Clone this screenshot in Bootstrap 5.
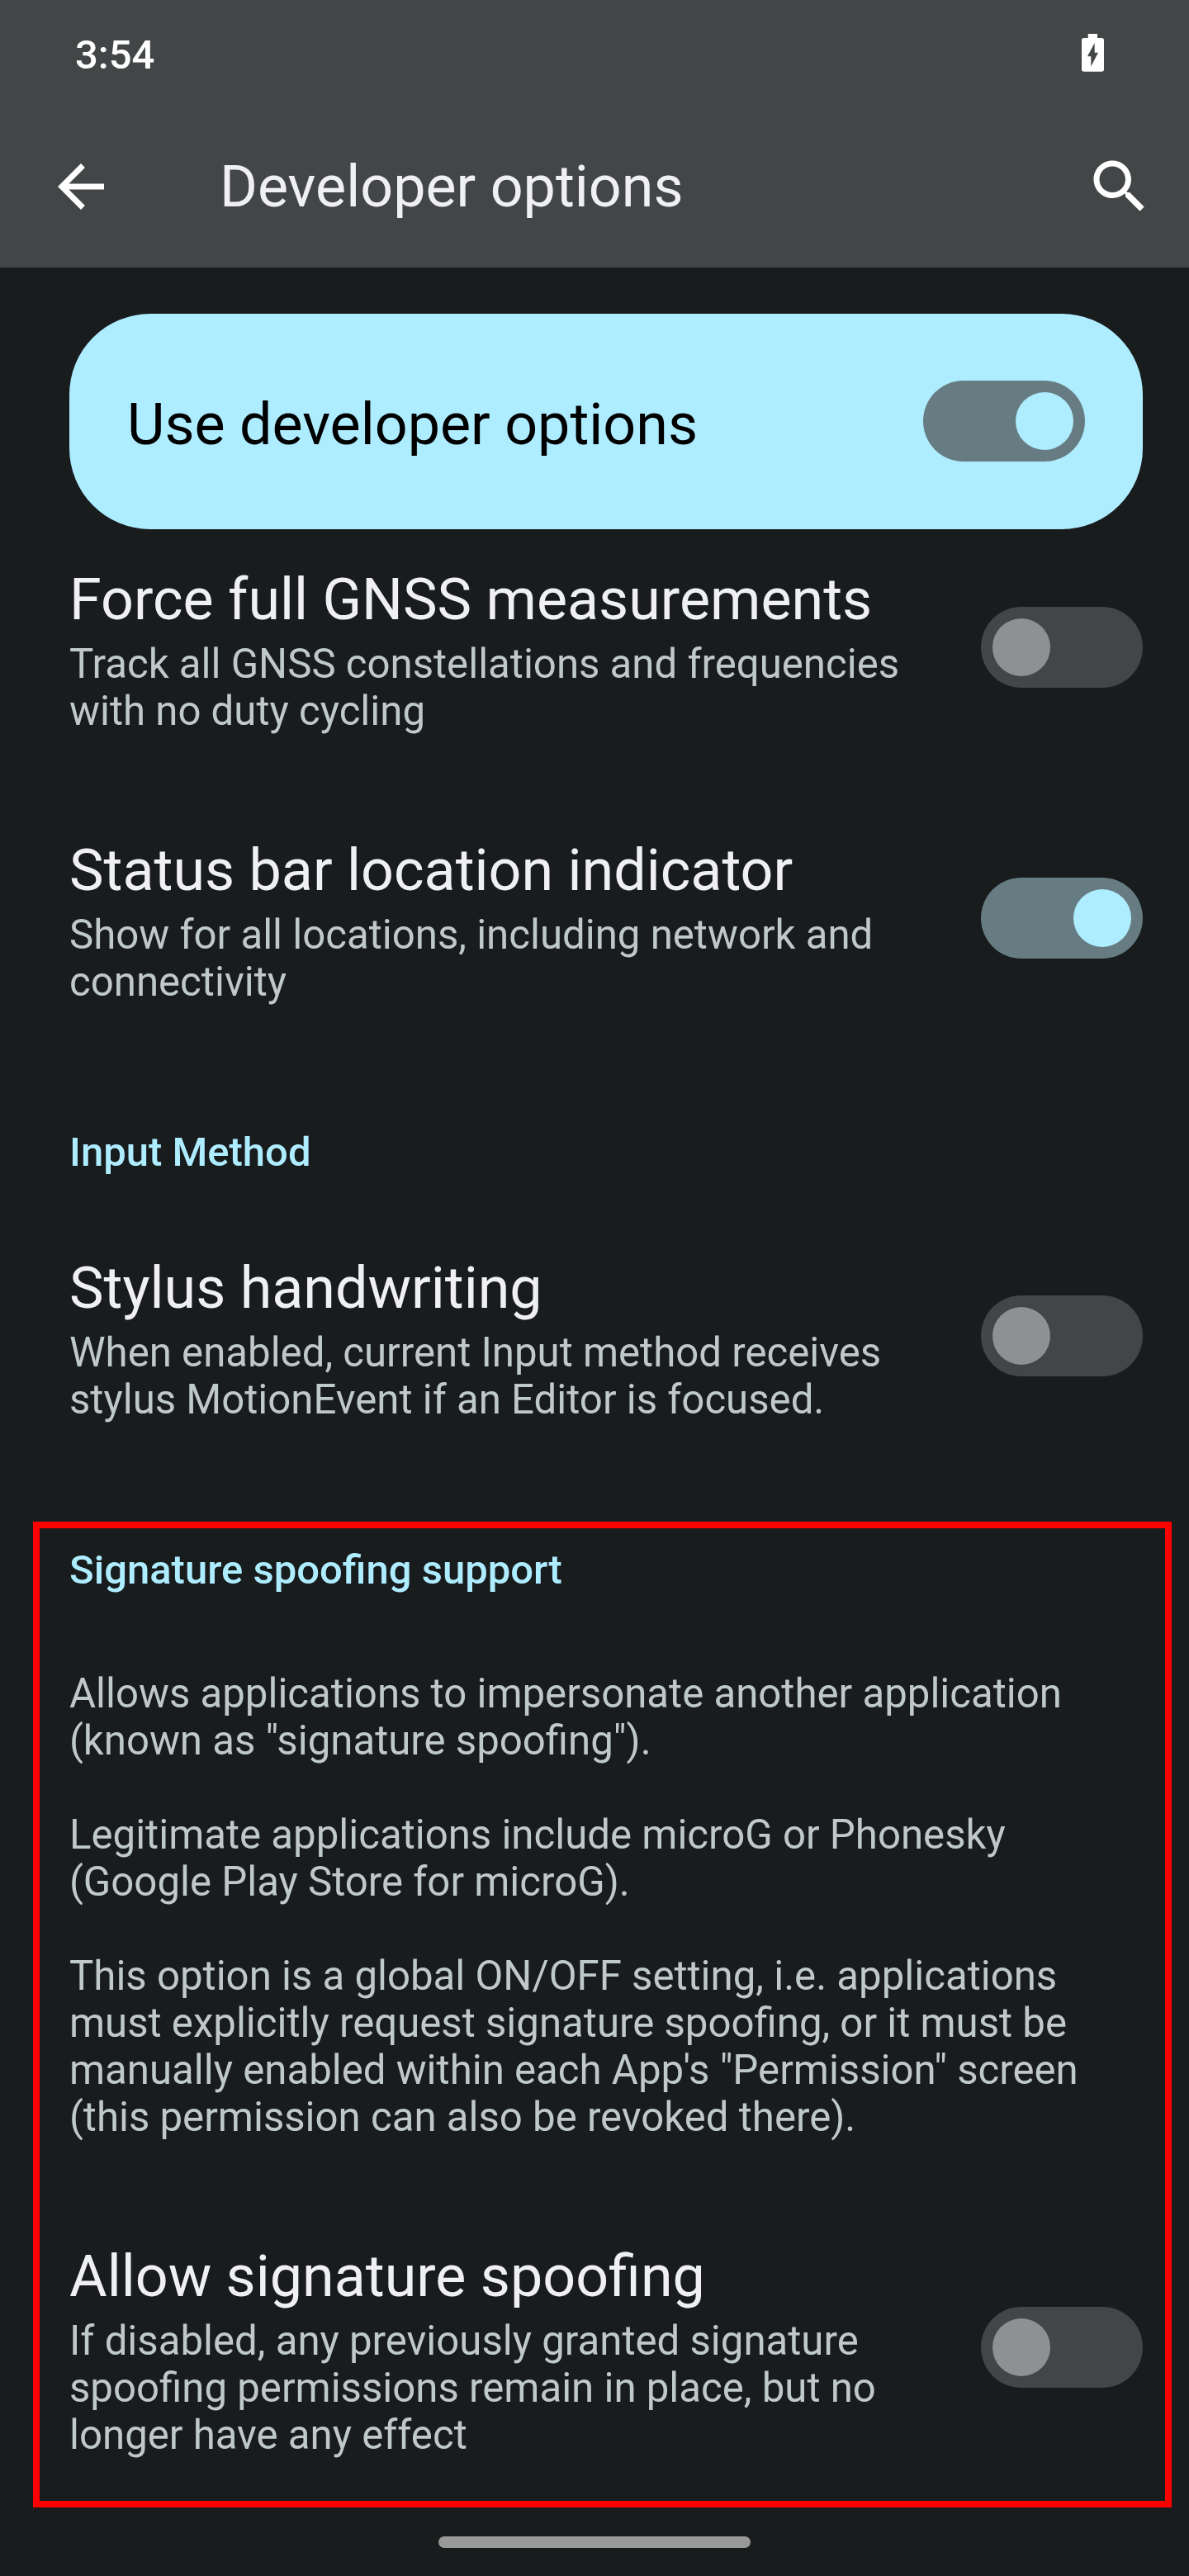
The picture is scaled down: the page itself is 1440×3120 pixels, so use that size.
<!DOCTYPE html>
<html lang="en">
<head>
<meta charset="utf-8">
<meta name="viewport" content="width=device-width, initial-scale=1">
<title>Developer options</title>
<link href="https://cdn.jsdelivr.net/npm/bootstrap@5.3.0/dist/css/bootstrap.min.css" rel="stylesheet">
<style>
  body { background: #191c1d; color: #f0f0f3; font-family: Roboto, sans-serif; font-size: 49px; line-height: 57px; }
  .screen { width: 1440px; height: 3120px; overflow: hidden; }
  .top-area { background: #434647; height: 324px; }
  .status-row { height: 128px; padding: 0 103px 0 91px; color: #fff; }
  .clock { font-weight: 500; padding-top: 5px; }
  .app-row { height: 196px; padding: 0 42px 0 56px; }
  .big-text { font-size: 70px; line-height: 82px; font-weight: 400; }
  .app-title { margin-left: 126px; }
  .main-toggle { background: #aeecff; color: #000; height: 261px; border-radius: 98px; margin: 56px 56px 0 84px; padding: 0 70px; }
  .main-toggle .big-text { padding-top: 7px; }
  .main-toggle .toggle { margin-bottom: 1px; }
  .setting { padding: 65px 56px 58px 84px; }
  .setting.under-card { margin-top: -21px; }
  .summary, .notes { color: #bfc8ca; font-size: 49.17px; }
  .summary { margin-top: 9px; }
  .toggle { width: 196px; height: 98px; padding: 14px; background: #434647; }
  .setting .toggle { margin-bottom: 7px; }
  .toggle .knob { width: 70px; height: 70px; background: #8e9192; }
  .toggle.on { background: #677c82; }
  .toggle.on .knob { background: #aeecff; }
  .group-title { color: #aeecff; font-size: 49px; line-height: 57px; font-weight: 500; }
  .input-group-title { padding: 91px 84px 30px; }
  .outlined { border: 8px solid #f00; margin: 61px 21px 0 40px; padding: 22px 27px 0 36px; height: 1194px; }
  .notes { margin-top: 93px; }
  .notes p { margin-bottom: 57px; }
  .outlined .setting { padding: 66px 0 58px; }
  .outlined .toggle { margin-bottom: 8px; }
  .home-pill { width: 378px; height: 14px; background: #989998; margin-top: 35px; }
</style>
</head>
<body>
<div class="screen d-flex flex-column">
  <header class="top-area flex-shrink-0">
    <div class="status-row d-flex align-items-center justify-content-between">
      <span class="clock">3:54</span>
      <svg width="27" height="46" viewBox="0 0 27 46" aria-label="Battery charging"><path fill="#fff" fill-rule="evenodd" d="M7.7 0H19V5H24.2Q27 5 27 7.8V43Q27 45.8 24.2 45.8H2.8Q0 45.8 0 43V7.8Q0 5 2.8 5H7.7ZM15.7 11L7 27.3H11.3V39.5L20 22.7H15.7Z"/></svg>
    </div>
    <div class="app-row d-flex align-items-center">
      <svg width="84" height="84" viewBox="0 0 24 24" fill="#fff" aria-label="Back"><path d="M20 11H7.83l5.59-5.59L12 4l-8 8 8 8 1.41-1.41L7.83 13H20v-2z"/></svg>
      <h1 class="app-title big-text mb-0 me-auto">Developer options</h1>
      <svg width="84" height="84" viewBox="0 0 24 24" fill="#fff" aria-label="Search"><path d="M15.5 14h-.79l-.28-.27C15.41 12.59 16 11.11 16 9.5 16 5.91 13.09 3 9.5 3S3 5.91 3 9.5 5.91 16 9.5 16c1.61 0 3.09-.59 4.23-1.57l.27.28v.79l5 4.99L20.49 19l-4.99-5zm-6 0C7.01 14 5 11.99 5 9.5S7.01 5 9.5 5 14 7.01 14 9.5 11.99 14 9.5 14z"/></svg>
    </div>
  </header>

  <main>
    <div class="main-toggle d-flex align-items-center justify-content-between">
      <span class="big-text">Use developer options</span>
      <span class="toggle on rounded-pill d-flex justify-content-end" role="switch" aria-checked="true"><span class="knob rounded-circle"></span></span>
    </div>

    <section class="setting under-card d-flex align-items-center justify-content-between">
      <div class="text-nowrap">
        <h2 class="big-text mb-0">Force full GNSS measurements</h2>
        <div class="summary">Track all GNSS constellations and frequencies<br>with no duty cycling</div>
      </div>
      <span class="toggle rounded-pill d-flex" role="switch" aria-checked="false"><span class="knob rounded-circle"></span></span>
    </section>

    <section class="setting d-flex align-items-center justify-content-between">
      <div class="text-nowrap">
        <h2 class="big-text mb-0">Status bar location indicator</h2>
        <div class="summary">Show for all locations, including network and<br>connectivity</div>
      </div>
      <span class="toggle on rounded-pill d-flex justify-content-end" role="switch" aria-checked="true"><span class="knob rounded-circle"></span></span>
    </section>

    <h3 class="group-title input-group-title mb-0">Input Method</h3>

    <section class="setting d-flex align-items-center justify-content-between">
      <div class="text-nowrap">
        <h2 class="big-text mb-0">Stylus handwriting</h2>
        <div class="summary">When enabled, current Input method receives<br>stylus MotionEvent if an Editor is focused.</div>
      </div>
      <span class="toggle rounded-pill d-flex" role="switch" aria-checked="false"><span class="knob rounded-circle"></span></span>
    </section>

    <div class="outlined">
      <h3 class="group-title mb-0">Signature spoofing support</h3>
      <div class="notes text-nowrap">
        <p>Allows applications to impersonate another application<br>(known as "signature spoofing").</p>
        <p>Legitimate applications include microG or Phonesky<br>(Google Play Store for microG).</p>
        <p>This option is a global ON/OFF setting, i.e. applications<br>must explicitly request signature spoofing, or it must be<br>manually enabled within each App's "Permission" screen<br>(this permission can also be revoked there).</p>
      </div>
      <section class="setting d-flex align-items-center justify-content-between">
        <div class="text-nowrap">
          <h2 class="big-text mb-0">Allow signature spoofing</h2>
          <div class="summary">If disabled, any previously granted signature<br>spoofing permissions remain in place, but no<br>longer have any effect</div>
        </div>
        <span class="toggle rounded-pill d-flex" role="switch" aria-checked="false"><span class="knob rounded-circle"></span></span>
      </section>
    </div>
  </main>

  <div class="home-pill rounded-pill mx-auto flex-shrink-0"></div>
</div>
<script src="https://cdn.jsdelivr.net/npm/bootstrap@5.3.0/dist/js/bootstrap.bundle.min.js"></script>
</body>
</html>
